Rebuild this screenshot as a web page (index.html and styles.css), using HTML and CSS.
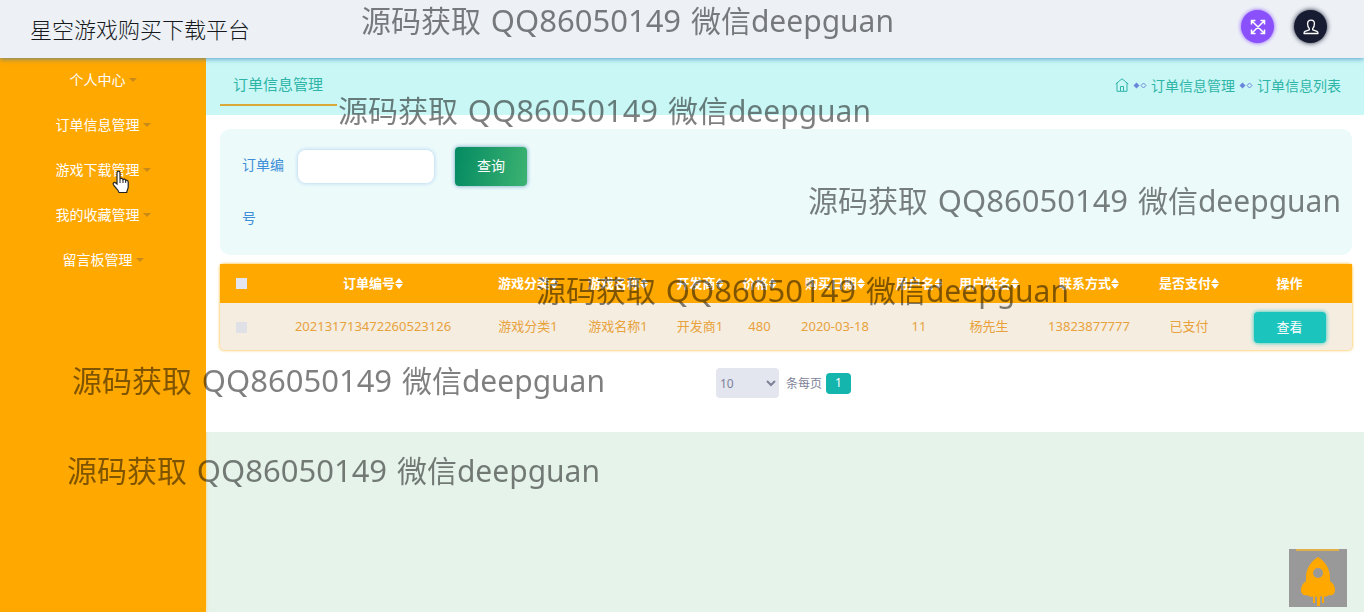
FILE: index.html
```html
<!DOCTYPE html>
<html lang="zh-CN">
<head>
<meta charset="utf-8">
<title>星空游戏购买下载平台</title>
<link rel="stylesheet" href="styles.css">
</head>
<body>
<header class="topbar">
  <h1 class="brand">星空游戏购买下载平台</h1>
  <div class="actions">
    <button class="round purple" type="button" aria-label="全屏">
      <svg width="16" height="16" viewBox="0 0 16 16" fill="none" stroke="#fff" stroke-width="1.500"><path d="M2 2l12 12M14 2L2 14M1.500 5.500v-4h4M10.500 1.500h4v4M14.500 10.500v4h-4M5.500 14.500h-4v-4"/></svg>
    </button>
    <button class="round dark" type="button" aria-label="用户">
      <svg width="16" height="16" viewBox="0 0 16 16" fill="none" stroke="#fff" stroke-width="1.300" stroke-linejoin="round"><path d="M6.300 9.500C5 8.500 4.600 6.800 4.600 4.700 4.600 2.400 6 1.200 8 1.200s3.400 1.200 3.400 3.500c0 2.100-.4 3.800-1.700 4.800v1.300l4.300 1.500c.8.300 1 1 1 2.200H1c0-1.200.2-1.900 1-2.200l4.300-1.500z"/></svg>
    </button>
  </div>
</header>
<div class="layout">
  <nav class="sidebar">
    <a class="item" href="#">个人中心<i class="caret"></i></a>
    <a class="item" href="#">订单信息管理<i class="caret"></i></a>
    <a class="item" href="#">游戏下载管理<i class="caret"></i></a>
    <a class="item" href="#">我的收藏管理<i class="caret"></i></a>
    <a class="item" href="#">留言板管理<i class="caret"></i></a>
  </nav>
  <main class="main">
    <div class="tabbar">
      <h2 class="tab">订单信息管理</h2>
      <nav class="crumbs">
        <a href="#" aria-label="首页"><svg class="home" width="14" height="14" viewBox="0 0 14 14" fill="none" stroke="currentColor"><path d="M.7 6L7 .8 13.300 6M2 5v8.300h10V5M5.500 13V8.500h3V13"/></svg></a>
        <svg class="sep" width="14" height="7" viewBox="0 0 14 7"><path d="M3.500 .5l3 3-3 3-3-3z" fill="#6a86dc"/><path d="M10.500 1l2.500 2.500-2.500 2.500L8 3.500z" fill="none" stroke="#6a86dc"/></svg>
        <a href="#">订单信息管理</a>
        <svg class="sep" width="14" height="7" viewBox="0 0 14 7"><path d="M3.500 .5l3 3-3 3-3-3z" fill="#6a86dc"/><path d="M10.500 1l2.500 2.500-2.500 2.500L8 3.500z" fill="none" stroke="#6a86dc"/></svg>
        <a href="#">订单信息列表</a>
      </nav>
    </div>
    <section class="content">
      <form class="search">
        <label class="search-label" for="order">订单编号</label>
        <input class="search-input" id="order" type="text">
        <button class="search-button" type="button">查询</button>
      </form>
      <table class="orders">
        <colgroup>
          <col class="c-check"><col class="c-order"><col class="c-type"><col class="c-name"><col class="c-dev"><col class="c-price"><col class="c-date"><col class="c-user"><col class="c-real"><col class="c-phone"><col class="c-paid"><col class="c-action">
        </colgroup>
        <thead>
          <tr>
            <th><input class="check" type="checkbox" aria-label="全选"></th>
            <th>订单编号<i class="sort"></i></th>
            <th>游戏分类<i class="sort"></i></th>
            <th>游戏名称<i class="sort"></i></th>
            <th>开发商<i class="sort"></i></th>
            <th>价格<i class="sort"></i></th>
            <th>购买日期<i class="sort"></i></th>
            <th>用户名<i class="sort"></i></th>
            <th>用户姓名<i class="sort"></i></th>
            <th>联系方式<i class="sort"></i></th>
            <th>是否支付<i class="sort"></i></th>
            <th>操作</th>
          </tr>
        </thead>
        <tbody>
          <tr>
            <td><input class="check" type="checkbox" aria-label="选择"></td>
            <td>202131713472260523126</td>
            <td>游戏分类1</td>
            <td>游戏名称1</td>
            <td>开发商1</td>
            <td>480</td>
            <td>2020-03-18</td>
            <td>11</td>
            <td>杨先生</td>
            <td>13823877777</td>
            <td>已支付</td>
            <td><button class="view" type="button">查看</button></td>
          </tr>
        </tbody>
      </table>
      <div class="pager">
        <select class="size" id="size"><option>10</option></select>
        <label for="size">条每页</label>
        <button class="page" type="button">1</button>
      </div>
    </section>
  </main>
</div>
<button class="to-top" type="button" aria-label="返回顶部">
  <svg width="58" height="58" viewBox="0 0 58 58"><path d="M7 0h43v2H7z" fill="#e0b04a"/><path d="M29 8c7 4 12 12 12 20v4c4 3 5 6 5 9 0 4-3 6-6 5-2 2-5 2-7 1-2 1-6 1-8 0-2 1-5 1-7-1-3 1-6-1-6-5 0-3 1-6 5-9v-4c0-8 5-16 12-20z" fill="#ffa800"/><circle cx="29" cy="24" r="5" fill="#999"/><path d="M24 47h2v7h-2zM28 47h3v10h-3zM33 47h2v7h-2z" fill="#ffa800"/></svg>
</button>
<div class="marks">
  <p class="mark m1">源码获取 <span class="num">QQ86050149</span> 微信deepguan</p>
  <p class="mark m2">源码获取 <span class="num">QQ86050149</span> 微信deepguan</p>
  <p class="mark m3">源码获取 <span class="num">QQ86050149</span> 微信deepguan</p>
  <p class="mark m4">源码获取 <span class="num">QQ86050149</span> 微信deepguan</p>
  <p class="mark m5">源码获取 <span class="num">QQ86050149</span> 微信deepguan</p>
  <p class="mark m6">源码获取 <span class="num">QQ86050149</span> 微信deepguan</p>
  <svg class="pointer" width="18" height="24" viewBox="0 0 18 24"><path d="M5 14V3c0-2.400 3-2.400 3 0v6c.5-1 2.600-1 3 .7.800-1 2.400-.6 2.700.8 1-.7 2.500 0 2.500 1.500v5c0 2-1.200 3-1.500 5.500H7C6.500 20 2.500 17 1.300 14.500c-.6-1.500 1-2.600 2.200-1.700z" fill="#fff" stroke="#222" stroke-width="1.200"/><path d="M8 9v4M11 10v3M13.700 11v2" stroke="#222"/></svg>
</div>
</body>
</html>
```
FILE: styles.css
```css
* { box-sizing: border-box; }
body {
  margin: 0;
  min-height: 100vh;
  display: flex;
  flex-direction: column;
  background: #e5f3eb;
  font-family: "Noto Sans", "Noto Sans CJK SC", sans-serif;
  font-size: 13px;
  font-weight: 400;
}
a { color: inherit; text-decoration: none; }
button, input, select { font: inherit; border: 0; }
button { padding: 0; cursor: pointer; }

.topbar {
  position: relative;
  z-index: 1;
  height: 58px;
  padding: 0 37px 0 30px;
  display: flex;
  align-items: center;
  justify-content: space-between;
  background: #edf1f6;
  box-shadow: 0 1px 5px rgba(40, 120, 190, .7);
}
.brand {
  margin: 0;
  padding-bottom: 3px;
  font-size: 22px;
  font-weight: 300;
  color: #16191c;
}
.actions { display: flex; gap: 20px; padding-bottom: 5px; }
.round {
  width: 33px;
  height: 33px;
  border-radius: 50%;
  display: grid;
  place-items: center;
}
.purple { background: #8950fc; box-shadow: 0 0 4px #8950fc; }
.dark { background: #181c32; box-shadow: 0 0 5px #181c32; }

.layout { flex: 1; display: flex; }
.sidebar {
  width: 206px;
  flex: none;
  background: #ffa800;
  box-shadow: 0 0 3px #ffd77a;
}
.item {
  height: 45px;
  padding-bottom: 4px;
  display: flex;
  align-items: center;
  justify-content: center;
  gap: 3px;
  color: #fff;
  font-size: 14px;
}
.caret {
  margin-top: 2px;
  border: 4px solid transparent;
  border-top-color: #c98a18;
  border-bottom: 0;
}

.main { flex: 1; min-width: 0; }
.tabbar {
  height: 57px;
  padding: 0 23px 0 14px;
  display: flex;
  justify-content: space-between;
  background: #c9f7f5;
  color: #2fb5a8;
}
.tab {
  margin: 0;
  height: 48px;
  padding: 6px 14px 0 13px;
  border-bottom: 2px solid #d9a93a;
  font-size: 15px;
  line-height: 40px;
  font-weight: 400;
}
.crumbs {
  padding-bottom: 3px;
  display: flex;
  align-items: center;
  gap: 4px;
  font-size: 14px;
}
.home { display: block; }

.content { padding: 14px 12px 34px 14px; background: #fff; }
.search {
  padding: 9px 22px 11px;
  display: flex;
  align-items: flex-start;
  border-radius: 10px;
  background: #ecfafa;
}
.search-label {
  width: 56px;
  padding-right: 12px;
  font-size: 14px;
  line-height: 53px;
  color: #3f8fd8;
}
.search-input {
  width: 136px;
  height: 33px;
  margin: 12px 21px 0 0;
  padding: 0 8px;
  border-radius: 8px;
  background: #fff;
  box-shadow: 0 0 4px #a9cdf0;
}
.search-button {
  width: 72px;
  height: 39px;
  margin-top: 9px;
  padding-bottom: 3px;
  border-radius: 4px;
  color: #fff;
  font-size: 14px;
  background: linear-gradient(100deg, #048a62, #3cb371);
  box-shadow: 0 0 4px #6a9fc0;
}

.orders {
  width: 100%;
  margin-top: 9px;
  table-layout: fixed;
  border-collapse: collapse;
  border-radius: 4px;
  background: #f5ede0;
  box-shadow: 0 0 3px #ffa800;
  text-align: center;
  color: #e8a23c;
}
.orders th, .orders td { padding: 0 0 2px; white-space: nowrap; }
.orders th { height: 39px; background: #ffa800; color: #fff; font-weight: 700; }
.orders td { height: 47px; }
.c-check { width: 42px; }
.c-order { width: 222px; }
.c-type { width: 88px; }
.c-name { width: 92px; }
.c-dev { width: 72px; }
.c-price { width: 47px; }
.c-date { width: 104px; }
.c-user { width: 64px; }
.c-real { width: 76px; }
.c-phone { width: 124px; }
.c-paid { width: 76px; }
.c-action { width: 125px; }
.check {
  appearance: none;
  width: 11px;
  height: 11px;
  margin: 0;
  background: #e4e6ef;
  vertical-align: middle;
}
.orders td .check { background: #dfe1e6; }
.sort {
  display: inline-block;
  width: 8px;
  height: 11px;
  background: #fff;
  clip-path: polygon(50% 0, 100% 45%, 0 45%, 0 55%, 100% 55%, 50% 100%, 0 55%, 0 45%);
  vertical-align: -1px;
}
.orders td:last-child { padding: 1px 0 0; }
.view {
  width: 72px;
  height: 31px;
  padding-bottom: 2px;
  border-radius: 4px;
  background: #1bc5bd;
  box-shadow: 0 0 4px #1bc5bd;
  color: #fff;
  vertical-align: middle;
}
.pager {
  margin-top: 18px;
  padding-right: 5px;
  display: flex;
  align-items: center;
  justify-content: center;
  color: #7e8299;
  font-size: 12px;
}
.size {
  width: 63px;
  height: 30px;
  margin-right: 7px;
  padding: 0;
  border-radius: 4px;
  background: #e4e6ef;
  color: #7e8299;
}
.page {
  width: 25px;
  height: 21px;
  margin-left: 4px;
  padding-bottom: 1px;
  border-radius: 4px;
  background: #14b5ac;
  color: #fff;
}

.to-top {
  position: fixed;
  right: 17px;
  bottom: 5px;
  width: 58px;
  height: 58px;
  background: #999;
}
.to-top svg { display: block; }

.marks { position: absolute; inset: 0; z-index: 2; overflow: hidden; pointer-events: none; }
.mark {
  position: absolute;
  margin: 0;
  font-size: 30px;
  line-height: 40px;
  white-space: nowrap;
  color: rgba(0, 0, 0, .5);
}
.num { margin: 0 2px; font-size: 31px; }
.m1 { left: 361px; top: 0; }
.m2 { left: 338px; top: 90px; }
.m3 { left: 808px; top: 180px; }
.m4 { left: 536px; top: 270px; }
.m5 { left: 72px; top: 360px; }
.m6 { left: 67px; top: 450px; }
.pointer { position: absolute; left: 112px; top: 170px; }
```
